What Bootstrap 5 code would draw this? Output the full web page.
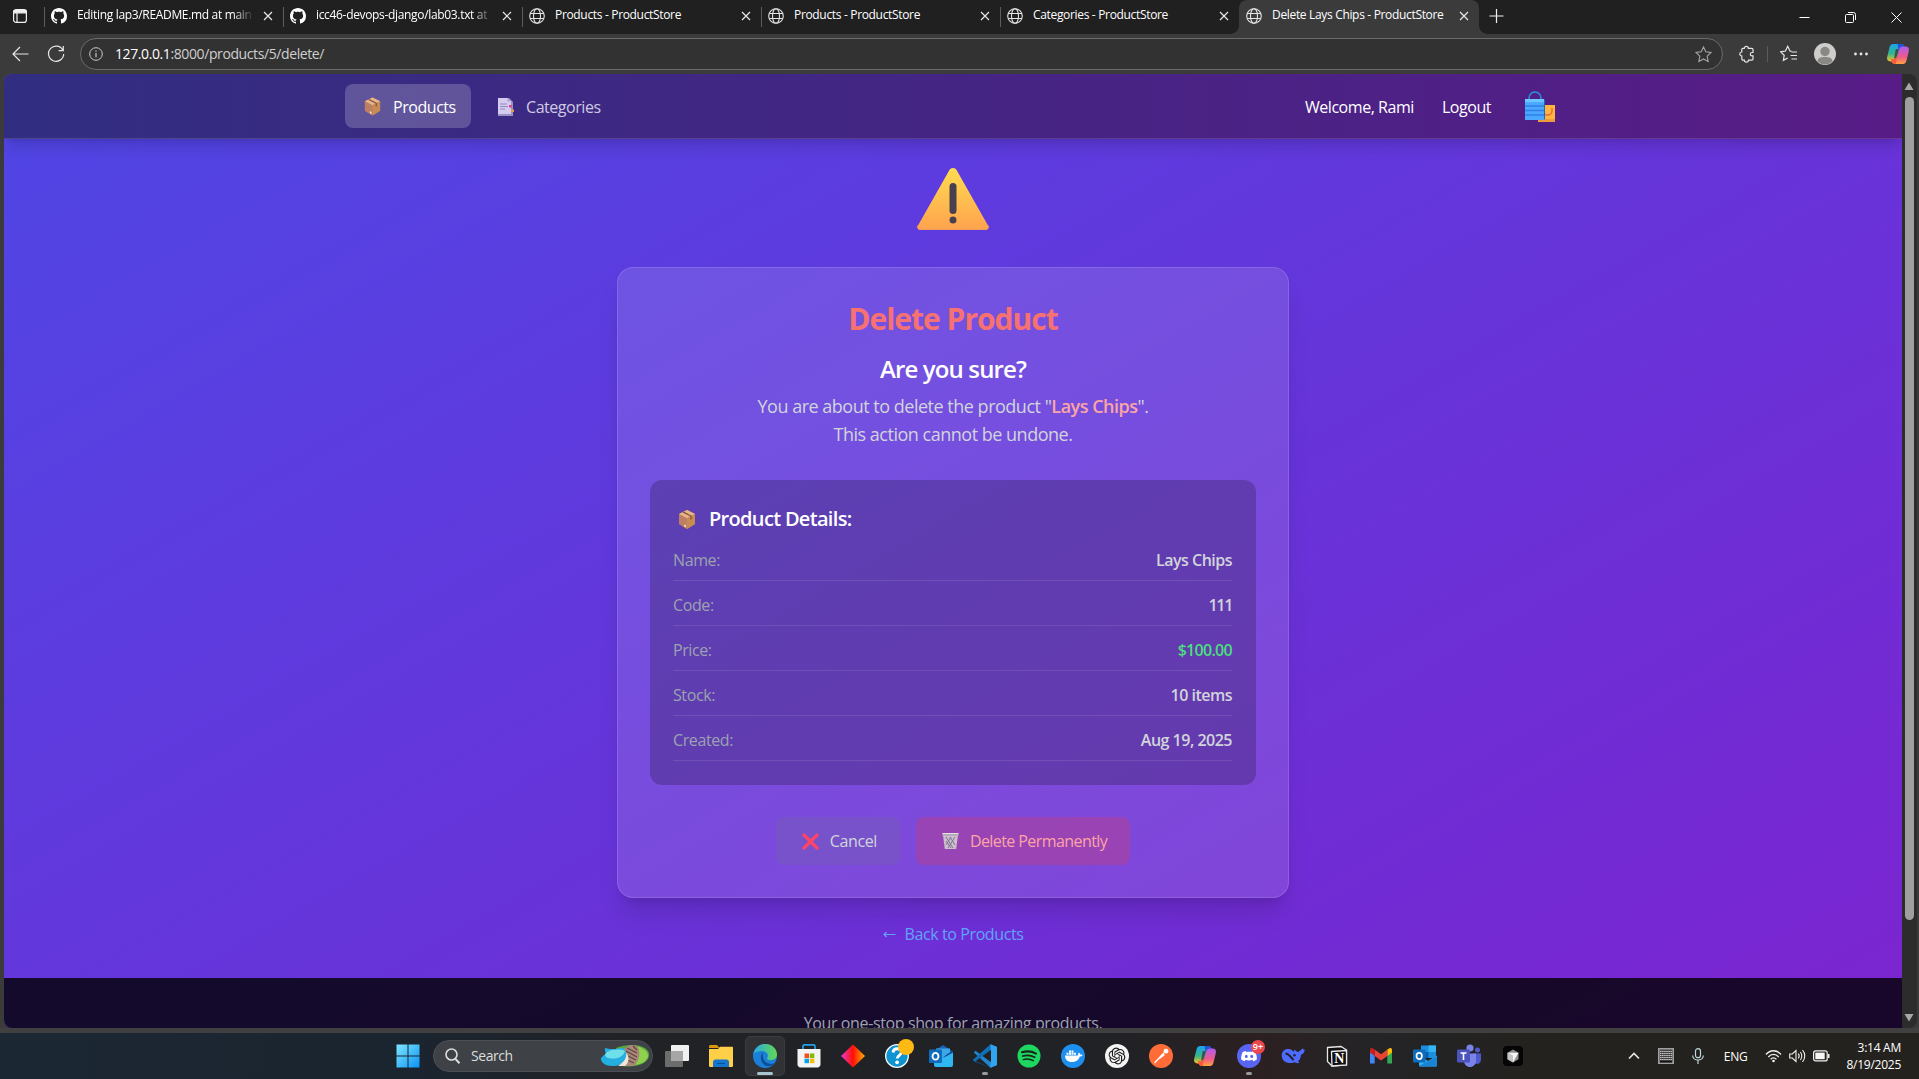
<!DOCTYPE html>
<html lang="en">
<head>
<meta charset="utf-8">
<meta name="viewport" content="width=device-width, initial-scale=1">
<title>Delete Lays Chips - ProductStore</title>
<link href="https://cdn.jsdelivr.net/npm/bootstrap@5.3.0/dist/css/bootstrap.min.css" rel="stylesheet">
<style>
  html, body { height: 100%; }
  body { font-family: "Open Sans", "Noto Sans", sans-serif; font-size: 16px; line-height: 24px; background: #3b3b3b; color: #fff; overflow: hidden; }
  svg { display: block; flex: none; }

  /* browser chrome */
  .tabstrip { height: 34px; background: #202020; padding-left: 44px; font-size: 12px; line-height: 16px; position: relative; }
  .tabmenu { position: absolute; left: 12px; top: 8px; }
  .tab-item { width: 239px; height: 34px; padding: 0 10px 2px 7px; position: relative; }
  .tab-item::before { content: ""; position: absolute; left: 0; top: 7px; width: 1px; height: 20px; background: #5c5c5c; }
  .tab-item .label { flex: 1 1 0; margin-left: 10px; margin-right: 9px; margin-top: -2px; overflow: hidden; white-space: nowrap; letter-spacing: -.33px; }
  .tab-item .fade-end { -webkit-mask-image: linear-gradient(to right, #000 88%, transparent); mask-image: linear-gradient(to right, #000 88%, transparent); }
  .tab-live { background: #3b3b3b; border-radius: 8px 8px 0 0; width: 240px; }
  .tab-live::before { left: -8px; top: auto; bottom: 0; width: 8px; height: 8px; background: radial-gradient(circle at 0 0, transparent 7.5px, #3b3b3b 8px); }
  .tab-live::after { content: ""; position: absolute; right: -8px; bottom: 0; width: 8px; height: 8px; background: radial-gradient(circle at 100% 0, transparent 7.5px, #3b3b3b 8px); }
  .wincontrols { gap: 35px; padding-right: 17px; }
  .toolbar-row { height: 40px; padding: 4px 9px 4px 12px; }
  .reload { margin-left: 18px; }
  .address { width: 1643px; height: 32px; margin-left: 15px; border: 1px solid #6b6b6b; border-radius: 16px; background: #323232; padding: 0 10px 0 8px; font-size: 14px; letter-spacing: -.4px; color: #cfcfcf; }
  .address b { font-weight: 400; color: #fff; }
  .tool-sep { width: 1px; height: 16px; margin: 0 12px 0 11px; background: #5c5c5c; }

  /* viewport */
  .viewport-row { height: 954px; padding-left: 4px; padding-right: 2px; }
  .site { width: 1898px; height: 954px; overflow: hidden; border-radius: 8px 0 0 8px; }
  .site-bg { height: 1090px; background: linear-gradient(to bottom right, #4f46e5, #7e22ce); }
  .scroller { width: 15px; background: #2c2c2c; border-radius: 0 8px 8px 0; padding: 8px 1px 6px 0; }
  .scroller .thumb { width: 9px; height: 823px; border-radius: 5px; background: #9f9f9f; margin-top: 6px; }
  .topnav { height: 65px; background: linear-gradient(to right, #312e81, #581c87); border-bottom: 1px solid rgba(255,255,255,.12); box-shadow: 0 10px 15px -3px rgba(0,0,0,.14), 0 4px 6px -4px rgba(0,0,0,.1); padding: 0 341px; font-weight: 500; position: relative; }
  .navpill { height: 44px; border-radius: 8px; padding: 1px 15px 0 17px; gap: 10px; color: #cfc9e2; text-decoration: none; letter-spacing: -.45px; }
  .navpill.current { background: rgba(255,255,255,.2); color: #fff; width: 126px; }
  .navpill + .navpill { margin-left: 8px; }
  .navuser { letter-spacing: -.45px; padding-top: 1px; }
  .bags { margin: 0 5px 0 33px; }
  .confirm { width: 672px; height: 631px; border: 1px solid rgba(255,255,255,.13); border-radius: 16px; background: rgba(255,255,255,.12); padding: 33px 32px 32px; margin-top: 36px; box-shadow: 0 20px 25px -5px rgba(0,0,0,.12), 0 8px 10px -6px rgba(0,0,0,.1); }
  .confirm h1 { font-size: 30px; line-height: 36px; font-weight: 700; color: #f87171; margin: 0 0 16px; letter-spacing: -1px; }
  .confirm h2 { font-size: 24px; line-height: 32px; font-weight: 650; margin: 0 0 7px; letter-spacing: -.85px; }
  .confirm .msg { font-size: 18px; line-height: 28px; color: #d1d5db; margin: 0; letter-spacing: -.49px; }
  .confirm .msg b { font-weight: 600; color: #fca5a5; }
  .details { border-radius: 12px; background: rgba(0,0,0,.2); padding: 25px 24px 24px 23px; margin-top: 32px; height: 305px; }
  .details h3 { font-size: 20px; line-height: 28px; font-weight: 650; letter-spacing: -.68px; margin: 0 0 7px; gap: 12px; padding-left: 4px; }
  .detail-row { height: 45px; border-bottom: 1px solid rgba(255,255,255,.1); padding-top: 12px; letter-spacing: -.4px; }
  .details h3 + .detail-row { height: 41px; padding-top: 8px; }
  .detail-row dt { font-weight: 400; color: #9ca3af; }
  .detail-row dd { font-weight: 650; color: #d1d5db; margin: 0; letter-spacing: -.5px; }
  .detail-row .money { color: #4ade80; letter-spacing: -.7px; }
  .detail-row .code-no { letter-spacing: -1.3px; }
  .act { height: 48px; border: 0; border-radius: 8px; padding: 0 23px 0 26px; gap: 11px; font-size: 16px; letter-spacing: -.4px; }
  .act, .act:hover { color: #d1d5db; background: rgba(107,114,128,.2); }
  .act-del, .act-del:hover { color: #fca5a5; background: rgba(200,60,115,.38); letter-spacing: -.58px; }
  .backlink { color: #60a5fa; text-decoration: none; gap: 9px; letter-spacing: -.4px; margin-top: 24px; }
  .site-footer { height: 112px; background: rgba(0,0,0,.8); color: #9ca3af; padding-top: 33px; letter-spacing: -.38px; }

  /* taskbar */
  .chrome-edge { height: 5px; background: #404040; }
  .taskbar { height: 46px; background: linear-gradient(to right, #1b2733 0, #1b2530 400px, #202226 620px, #212226 1120px, #2c2021 1260px, #242427 1370px, #23221e 1540px, #23221f 100%); padding-left: 386px; position: relative; }
  .tb-slot { width: 44px; height: 46px; position: relative; }
  .tb-slot.open::after { content: ""; position: absolute; left: 19px; top: 39px; width: 6px; height: 3px; border-radius: 2px; background: #9a9a9a; }
  .tb-slot.focused .tile { width: 40px; height: 40px; border-radius: 5px; background: #303236; border: 1px solid #3a3c40; }
  .tb-slot.focused::after { content: ""; position: absolute; left: 14px; top: 39px; width: 16px; height: 3px; border-radius: 2px; background: #a8c4d0; }
  .searchbox { width: 220px; height: 32px; border-radius: 16px; background: #3e4146; border: 1px solid #4b4e52; padding: 0 2px 0 11px; font-size: 14px; color: #dcdcdc; margin: 0 2px 0 3px; letter-spacing: -.45px; }
  .searchbox span { margin-left: 11px; }
  .tray { margin-left: auto; padding-right: 18px; font-size: 12px; line-height: 17px; letter-spacing: -.25px; }
  .tray .ico { margin-left: 18px; }
  .tray .ico-near { margin-left: 7px; }
</style>
</head>
<body>
<svg width="0" height="0" class="position-absolute">
  <defs>
    <linearGradient id="gWarn" x1="0" y1="0" x2="0" y2="1"><stop offset="0" stop-color="#ffdc50"/><stop offset="1" stop-color="#ffa34e"/></linearGradient>
    <linearGradient id="gWin" x1="0" y1="0" x2="1" y2="1"><stop offset="0" stop-color="#7fe6ff"/><stop offset="1" stop-color="#0a93f5"/></linearGradient>
    <linearGradient id="gCopA" x1="0" y1="0" x2="0" y2="1"><stop offset="0" stop-color="#1aa4ee"/><stop offset=".55" stop-color="#35b58a"/><stop offset="1" stop-color="#f2c61f"/></linearGradient>
    <linearGradient id="gCopB" x1="0" y1="0" x2="0" y2="1"><stop offset="0" stop-color="#b05cf0"/><stop offset=".6" stop-color="#ef5a8a"/><stop offset="1" stop-color="#ffa53d"/></linearGradient>
    <linearGradient id="gDia"><stop offset="0" stop-color="#e63bd0"/><stop offset=".5" stop-color="#ff1005"/><stop offset="1" stop-color="#ffb000"/></linearGradient>
    <linearGradient id="gEdge" x1="0" y1="0" x2="1" y2="0"><stop offset="0" stop-color="#2aa9e8"/><stop offset="1" stop-color="#62d84e"/></linearGradient>
    <symbol id="box" viewBox="0 0 20 20"><path d="M10 .5 18 4.500v10L10 19.500 2 14.500v-10z" fill="#c98a5c"/><path d="M10 .5 18 4.500 10 8.800 2 4.500z" fill="#e8b787"/><path d="M10 8.800 18 4.500v10l-8 5z" fill="#c98b54"/><path d="M2 4.500 10 8.800v10.700l-8-5z" fill="#bd7f63"/><path d="m5.300 2.900 8 4.200v3.100l1.500-.8V6.300l-8-4.200z" fill="#8a5a44"/><path d="M7.300 14.800l1.600.9v2.200l-1.600-.9z" fill="#f4e6df"/></symbol>
    <symbol id="globe" viewBox="0 0 16 16"><g fill="none" stroke="#e4e4e4" stroke-width="1.100"><circle cx="8" cy="8" r="7.300"/><ellipse cx="8" cy="8" rx="3.500" ry="7.300"/><path d="M1.200 5.500h13.600M1.200 10.500h13.600"/></g></symbol>
    <symbol id="gh" viewBox="0 0 16 16"><path fill="#fff" d="M8 0C3.580 0 0 3.580 0 8c0 3.540 2.290 6.530 5.470 7.590.4.070.55-.17.55-.38 0-.19-.01-.82-.01-1.490-2.010.37-2.530-.49-2.690-.94-.09-.23-.48-.94-.82-1.130-.28-.15-.68-.52-.01-.53.63-.01 1.080.58 1.230.82.72 1.210 1.870.87 2.330.66.07-.52.28-.87.51-1.070-1.780-.2-3.640-.89-3.640-3.950 0-.87.31-1.590.82-2.150-.08-.2-.36-1.020.08-2.120 0 0 .67-.21 2.200.82.64-.18 1.320-.27 2-.27s1.360.09 2 .27c1.530-1.040 2.200-.82 2.200-.82.44 1.100.16 1.920.08 2.120.51.56.82 1.270.82 2.150 0 3.070-1.870 3.750-3.650 3.950.29.25.54.73.54 1.480 0 1.070-.01 1.930-.01 2.200 0 .21.15.46.55.38A8.010 8.010 0 0 0 16 8c0-4.420-3.580-8-8-8z"/></symbol>
    <symbol id="x" viewBox="0 0 10 10"><path d="M1 1l8 8M9 1 1 9" stroke="#e8e8e8" stroke-width="1.200" fill="none"/></symbol>
    <symbol id="copilot" viewBox="0 0 24 24"><path d="M7 2h8c2 0 2.800 1 3.300 2.800L19 7h-3.200c-1.600 0-2.500.8-3 2.500l-2 7c-.6 2-1.600 3-3.500 3H4.500C1.600 19.500.5 17.500 1.200 14.800L3.500 5.500C4.100 3.200 5 2 7 2z" fill="url(#gCopA)"/><path d="M11.500 2H15c2 0 2.800 1 3.300 2.800L19 7h-3.200c-1.500 0-2.400.7-2.900 2z" fill="#1c53d8"/><path d="M17 22H9c-2 0-2.800-1-3.300-2.800L5 17h3.200c1.600 0 2.500-.8 3-2.500l2-7c.6-2 1.600-3 3.500-3h2.800c2.900 0 4 2 3.300 4.700l-2.300 9.300C19.900 20.800 19 22 17 22z" fill="url(#gCopB)"/><path d="M9.800 7h3l-2.600 9.500H8z" fill="#343238" opacity=".75"/><path d="M5 17h3.200c1.600 0 2.500-.8 3-2.500L9.800 22H9c-2 0-2.800-1-3.300-2.800z" fill="#ff5a3c"/></symbol>
  </defs>
</svg>

<div class="d-flex flex-column vh-100">
  <!-- tab strip -->
  <div class="tabstrip d-flex">
    <svg class="tabmenu" width="16" height="16" viewBox="0 0 16 16" fill="none" stroke="#f0f0f0" stroke-width="1.200"><rect x="1.600" y="1.600" width="12.800" height="12.800" rx="2.500"/><path d="M2 2.500h12v2.300H2z" fill="#f0f0f0"/><path d="M5 5v9"/></svg>
    <div class="tab-item d-flex align-items-center"><svg width="16" height="16"><use href="#gh"/></svg><span class="label fade-end">Editing lap3/README.md at main</span><svg width="10" height="10"><use href="#x"/></svg></div>
    <div class="tab-item d-flex align-items-center"><svg width="16" height="16"><use href="#gh"/></svg><span class="label fade-end">icc46-devops-django/lab03.txt at</span><svg width="10" height="10"><use href="#x"/></svg></div>
    <div class="tab-item d-flex align-items-center"><svg width="16" height="16"><use href="#globe"/></svg><span class="label">Products - ProductStore</span><svg width="10" height="10"><use href="#x"/></svg></div>
    <div class="tab-item d-flex align-items-center"><svg width="16" height="16"><use href="#globe"/></svg><span class="label">Products - ProductStore</span><svg width="10" height="10"><use href="#x"/></svg></div>
    <div class="tab-item d-flex align-items-center"><svg width="16" height="16"><use href="#globe"/></svg><span class="label">Categories - ProductStore</span><svg width="10" height="10"><use href="#x"/></svg></div>
    <div class="tab-item tab-live d-flex align-items-center"><svg width="16" height="16"><use href="#globe"/></svg><span class="label">Delete Lays Chips - ProductStore</span><svg width="10" height="10"><use href="#x"/></svg></div>
    <svg class="ms-2 mt-2" width="18" height="16" viewBox="0 0 18 16" stroke="#f0f0f0" stroke-width="1.200"><path d="M9.500 1v14M2.500 8h14"/></svg>
    <div class="wincontrols d-flex align-items-center ms-auto">
      <svg width="11" height="11" viewBox="0 0 11 11" stroke="#fff"><path d="M.5 5.500h10"/></svg>
      <svg width="11" height="11" viewBox="0 0 11 11" fill="none" stroke="#fff"><rect x=".5" y="2.500" width="8" height="8" rx="1"/><path d="M3 .5h5.500a2 2 0 0 1 2 2V8"/></svg>
      <svg width="11" height="11" viewBox="0 0 11 11" stroke="#fff"><path d="M.5.5l10 10M10.500.5l-10 10"/></svg>
    </div>
  </div>

  <!-- address row -->
  <div class="toolbar-row d-flex align-items-center">
    <svg width="17" height="16" viewBox="0 0 17 16" fill="none" stroke="#e6e6e6" stroke-width="1.200"><path d="M16.500 8H1M8 1 1 8l7 7"/></svg>
    <svg class="reload" width="18" height="18" viewBox="0 0 18 18" fill="none" stroke="#e6e6e6" stroke-width="1.200"><path d="M16 5.500A7.600 7.600 0 1 0 16.700 9M16.300 1v4.700h-4.700"/></svg>
    <div class="address d-flex align-items-center">
      <svg width="14" height="14" viewBox="0 0 14 14" fill="none" stroke="#c9c9c9"><circle cx="7" cy="7" r="6.300"/><path d="M7 6v4.300M7 3.500v1.200" stroke-width="1.200"/></svg>
      <span class="ms-2 ps-1"><b>127.0.0.1</b>:8000/products/5/delete/</span>
      <svg class="ms-auto" width="17" height="17" viewBox="0 0 17 17" fill="none" stroke="#a5a5a5" stroke-width="1.100"><path d="m8.500 1 2.300 4.800 5.200.7-3.800 3.700.9 5.300-4.600-2.500-4.600 2.500.9-5.300L1 6.500l5.200-.7z"/></svg>
    </div>
    <svg class="ms-3" width="17" height="18" viewBox="0 0 17 18" fill="none" stroke="#e6e6e6" stroke-width="1.200"><path d="M5.300 3.300a2 2 0 0 1 4 0h3.500a1.200 1.200 0 0 1 1.200 1.200v3h-1a1.700 1.700 0 0 0 0 3.400h1v3a1.200 1.200 0 0 1-1.200 1.200H9.500a2.100 2.100 0 0 1-4.200 0H4a1.200 1.200 0 0 1-1.200-1.200V11a2 2 0 0 1 0-4V4.500A1.200 1.200 0 0 1 4 3.300z"/></svg>
    <span class="tool-sep"></span>
    <svg width="18" height="18" viewBox="0 0 18 18" fill="none" stroke="#e6e6e6" stroke-width="1.200"><path d="M11.500 6.300 10 6 7.700 1.300 5.400 6l-4.700.8 3.500 3.500-.8 5 4.300-2.300M11.500 7H17M10.500 10.500H17M11.500 14H17"/></svg>
    <svg class="ms-3" width="22" height="22" viewBox="0 0 22 22"><circle cx="11" cy="11" r="11" fill="#cfcdca"/><circle cx="11" cy="8.500" r="4.700" fill="#8a8885"/><path d="M3.500 18.500C4 14.500 7 14 11 14s7 .5 7.500 4.500a11 11 0 0 1-15 0z" fill="#8a8885"/></svg>
    <svg class="ms-3" width="17" height="4" viewBox="0 0 17 4" fill="#e6e6e6"><circle cx="3.500" cy="2" r="1.400"/><circle cx="9" cy="2" r="1.400"/><circle cx="14.500" cy="2" r="1.400"/></svg>
    <svg class="ms-auto" width="24" height="24"><use href="#copilot"/></svg>
  </div>

  <!-- page -->
  <div class="viewport-row d-flex">
    <div class="site">
      <div class="site-bg d-flex flex-column">
        <nav class="topnav d-flex align-items-center">
          <a class="navpill current d-flex align-items-center" href="#"><svg width="21" height="19"><use href="#box"/></svg>Products</a>
          <a class="navpill d-flex align-items-center" href="#"><svg width="20" height="20" viewBox="1 0 20 20"><path d="M3 1h11l4 4v14H3z" fill="#9a92c4"/><path d="M3 1h9.500L16 4.500V17H3z" fill="#d4cbee"/><path d="M12.500 1v3.500H16z" fill="#a9a0d0"/><path d="M5 7h7M5 9.500h8M5 12h5" stroke="#9489c0"/><path d="M14 8h3v2.500h-3z" fill="#d8498a"/><path d="M16 12.500h3V15h-3z" fill="#e0a04a"/></svg>Categories</a>
          <span class="navuser ms-auto">Welcome, Rami</span>
          <span class="navuser ms-4 ps-1">Logout</span>
          <svg class="bags" width="32" height="32" viewBox="0 0 32 32"><path d="M14 15h17v17H14z" fill="#ffb43c"/><path d="M14 29h17v3H14z" fill="#ef9a3e"/><path d="M19 18v3a4.500 4 0 0 0 9 0v-3" fill="none" stroke="#ef6a3c" stroke-width="1.500"/><path d="M5 11V8a6 6 0 0 1 12 0v3" fill="none" stroke="#2c8de0" stroke-width="1.600"/><path d="M1 9h19v21H1z" fill="#4aa8ff"/><path d="M1 9h19v3H1z" fill="#6cc6ff"/><path d="M1 16h19M1 20.500h19M1 25h19" stroke="#2f7fec" stroke-width="1.500"/><path d="M20 9v21l1-1V10z" fill="#1c67c8"/></svg>
        </nav>

        <main class="d-flex flex-column align-items-center" style="height:839px">
          <svg style="margin-top:28px" width="74" height="64" viewBox="0 0 74 64"><path d="M33.300 3.200c1.600-2.900 5.800-2.900 7.400 0L72 58.500c1 2-.2 4-2.300 4H4.300c-2.100 0-3.300-2-2.300-4z" fill="url(#gWarn)"/><path d="M2 58.500c-.8 2 .2 4 2.300 4h65.400c2.100 0 3.300-2 2.300-4" fill="none" stroke="#f09a5c" stroke-width="1.200"/><rect x="33.500" y="16" width="7" height="31" rx="3.500" fill="#48404f"/><circle cx="37" cy="53" r="3.500" fill="#48404f"/></svg>
          <section class="confirm text-center">
            <h1>Delete Product</h1>
            <h2>Are you sure?</h2>
            <p class="msg">You are about to delete the product "<b>Lays Chips</b>".<br>This action cannot be undone.</p>
            <dl class="details mb-0 text-start">
              <h3 class="d-flex align-items-center"><svg width="20" height="21"><use href="#box"/></svg>Product Details:</h3>
              <div class="detail-row d-flex justify-content-between"><dt>Name:</dt><dd>Lays Chips</dd></div>
              <div class="detail-row d-flex justify-content-between"><dt>Code:</dt><dd class="code-no">111</dd></div>
              <div class="detail-row d-flex justify-content-between"><dt>Price:</dt><dd class="money">$100.00</dd></div>
              <div class="detail-row d-flex justify-content-between"><dt>Stock:</dt><dd>10 items</dd></div>
              <div class="detail-row d-flex justify-content-between"><dt>Created:</dt><dd>Aug 19, 2025</dd></div>
            </dl>
            <div class="d-flex justify-content-center gap-3" style="margin-top:32px">
              <button class="act btn d-flex align-items-center"><svg width="17" height="17" viewBox="0 0 17 17"><path d="M2 2l13 13M15 2 2 15" stroke="#ff4468" stroke-width="3.200" stroke-linecap="round"/></svg>Cancel</button>
              <button class="act act-del btn d-flex align-items-center"><svg width="17" height="17" viewBox="0 0 17 17"><path d="M1 2h15l-1.800 14H2.800z" fill="#cbbfd0"/><path d="M4 4l7 11M8 4l5 8M13 4 6 15M9 4 4 12M4 8l5 7" stroke="#7b6d86" stroke-width=".9"/><path d="M.5.500h16v2.500H.5z" fill="#b5adb5"/><path d="M.5.500h16" stroke="#e5e0e5"/></svg>Delete Permanently</button>
            </div>
          </section>
          <a class="backlink d-flex align-items-center" href="#"><svg width="13" height="10" viewBox="0 0 13 10" fill="none" stroke="#60a5fa" stroke-width="1.200"><path d="M12.500 5.500H1M3.500 3 1 5.500 3.500 8"/></svg>Back to Products</a>
        </main>
        <footer class="site-footer text-center flex-grow-1">Your one-stop shop for amazing products.</footer>
      </div>
    </div>
    <div class="scroller d-flex flex-column align-items-center">
      <svg width="10" height="9" viewBox="0 0 10 9" fill="#a8a8a8"><path d="M5 .5 9.500 8H.5z"/></svg>
      <div class="thumb"></div>
      <svg class="mt-auto" width="10" height="9" viewBox="0 0 10 9" fill="#a8a8a8"><path d="M5 8.500.5 1h9z"/></svg>
    </div>
  </div>

  <div class="chrome-edge"></div>

  <!-- taskbar -->
  <div class="taskbar d-flex align-items-center">
    <div class="tb-slot d-flex align-items-center justify-content-center"><svg width="24" height="24" viewBox="0 0 24 24"><path fill="url(#gWin)" d="M.5.500h11v11H.5zM12.500.500h11v11h-11zM.5 12.500h11v11H.5zM12.500 12.500h11v11h-11z"/></svg></div>
    <div class="searchbox d-flex align-items-center">
      <svg width="15" height="16" viewBox="0 0 15 16" fill="none" stroke="#dcdcdc" stroke-width="1.600"><circle cx="6.500" cy="6.500" r="5.500"/><path d="m10.500 11 4 4.200" stroke-width="2"/></svg>
      <span>Search</span>
      <svg class="ms-auto" width="50" height="24" viewBox="0 0 50 24"><path d="M16 4C28-1 48 0 49 10c1 9-12 14-28 12z" fill="#54a83a"/><path d="M33 2c10 0 16 6 15 11-3 6-8 7-13 8 5-6 4-13-2-19z" fill="#8fd04e"/><path d="M1 16C0 13 5 11 6 9 4 6 5 4 6 4c1 1 6 1 10 1 5-2 9-1 12 1 1 8-6 17-16 16C6 22 2 19 1 16z" fill="#25aee0"/><path d="M7 8c6-3 14-3 18-1-2 6-8 9-17 7-3-1-4-4-1-6z" fill="#6fe0ea"/><path d="M24 5c4-4 9-5 13-3 4 5 3 14-3 20H22c5-5 7-11 2-17z" fill="#a98877"/><path d="M27 4l10 5M26 7l11 6M28 12l8 4M27 16l7 3M33 2l4 4" stroke="#5f4444" stroke-width="1.300"/><path d="M18 22c6-4 9-8 8-13 4 4 3 10-1 13z" fill="#f0e5d8"/></svg>
    </div>
    <div class="tb-slot d-flex align-items-center justify-content-center"><svg width="24" height="22" viewBox="0 0 24 22"><rect x="6" y="0" width="18" height="16" rx="1" fill="#f0f0f0"/><rect x="0" y="6" width="18" height="16" rx="1" fill="#6c6c6c"/><rect x="6" y="6" width="12" height="10" fill="#a6a6a6"/></svg></div>
    <div class="tb-slot d-flex align-items-center justify-content-center"><svg width="24" height="22" viewBox="0 0 24 22"><path d="M0 1.500C0 .700.700 0 1.500 0H8l2.500 3H0z" fill="#d9960c"/><path d="M0 4h9l2-2.300h12c.600 0 1 .4 1 1V20.500c0 .8-.4 1.500-1 1.500H1c-.6 0-1-.7-1-1.500z" fill="#ffcf48"/><path d="M4 22v-5c0-1.500 1-2.500 2.500-2.500h11c1.500 0 2.500 1 2.500 2.500v5z" fill="#1575cf"/><path d="M8 18.500h8" stroke="#0b4f9c"/></svg></div>
    <div class="tb-slot focused d-flex align-items-center justify-content-center"><div class="tile d-flex align-items-center justify-content-center"><svg width="24" height="24" viewBox="0 0 24 24"><circle cx="12" cy="12" r="12" fill="#1a7fd6"/><path d="M.3 10C2 3.500 7 0 12.500 0 19 0 24 5 24 10.500c0 3.500-2.800 5.700-6 5.700-2.600 0-4-.9-4-1.700 0-.7.9-1.100.9-3C14.900 8.800 12 7 9 7 5 7 1.500 8.800.3 10z" fill="url(#gEdge)"/><path d="M10 8.200C7 11 6.500 18 12.500 21.500c3 1.300 6.500.6 9.300-2.500-2 1-4.300 1.200-6.300.5C10.500 18 9 13 10 8.200z" fill="#0d4d98"/></svg></div></div>
    <div class="tb-slot d-flex align-items-center justify-content-center"><svg width="24" height="24" viewBox="0 0 24 24"><path d="M6 5V2.200C6 1.200 6.700.800 7.500.800h9c.8 0 1.500.4 1.500 1.400V5" fill="none" stroke="#1da0e8" stroke-width="1.700"/><path d="M.5 5h23v15.500c0 1.500-1.300 3-3 3h-17c-1.700 0-3-1.500-3-3z" fill="#f3f3f3"/><path d="M7.500 9.500H12V14H7.500z" fill="#f25022"/><path d="M12.800 9.500h4.500V14h-4.500z" fill="#7fba00"/><path d="M7.500 14.700H12v4.500H7.500z" fill="#00a4ef"/><path d="M12.800 14.700h4.500v4.500h-4.500z" fill="#ffb900"/></svg></div>
    <div class="tb-slot d-flex align-items-center justify-content-center"><svg width="24" height="24" viewBox="0 0 24 24"><path d="M12 .5 24 12 12 23.500 0 12z" fill="url(#gDia)"/></svg></div>
    <div class="tb-slot d-flex align-items-center justify-content-center"><svg width="24" height="24" viewBox="0 0 24 24" overflow="visible"><circle cx="12" cy="12" r="11.300" fill="#0f94d2" stroke="#fff" stroke-width="1.300"/><path d="M8 8.500c.3-2.500 2-3.700 4.200-3.700 2.500 0 4.300 1.400 4.300 3.500 0 3-4.300 3.200-4.300 6.300" fill="none" stroke="#fff" stroke-width="2.900"/><circle cx="12.100" cy="18.300" r="1.900" fill="#fff"/><circle cx="21" cy="3" r="8" fill="#ffb914"/></svg></div>
    <div class="tb-slot d-flex align-items-center justify-content-center"><svg width="24" height="24" viewBox="0 0 24 24"><path d="M5 7 14 1l9 6v4H5z" fill="#1565b5"/><path d="M7 4.500h14v12H7z" fill="#3ca8ea"/><path d="M14 14 24 7v14c0 1.200-.8 2-2 2H7c-1.200 0-2-.8-2-2V9z" fill="#2fb7f2"/><path d="M14 14 24 8.500v-2L17 11z" fill="#0f3f8c"/><rect x="0" y="5.500" width="13" height="13.500" rx="1" fill="#0f6cbd"/><ellipse cx="6.500" cy="12.200" rx="3" ry="3.400" fill="none" stroke="#fff" stroke-width="1.800"/></svg></div>
    <div class="tb-slot open d-flex align-items-center justify-content-center"><svg width="24" height="24" viewBox="0 0 24 24"><path d="M17.500.2 24 3v18l-6.500 2.800L.8 8.500l1.700-1.700L18 18z" fill="#1f85cc"/><path d="M17.500 23.800.8 17.300 0 15.800 17.500.2 18 6 2.500 17.200z" fill="#0f6fb5"/><path d="M17.500.2 24 3v18l-6.500 2.800z" fill="#30a5ee"/><path d="M18 6v12l-8-6z" fill="#202226"/></svg></div>
    <div class="tb-slot d-flex align-items-center justify-content-center"><svg width="24" height="24" viewBox="0 0 24 24"><circle cx="12" cy="12" r="11.500" fill="#1ed760"/><g fill="none" stroke="#17251c" stroke-linecap="round"><path d="M5 8.300c4.800-1.400 10-1 14 1.300" stroke-width="2.100"/><path d="M5.700 12c4.200-1.200 8.500-.7 12 1.300" stroke-width="1.800"/><path d="M6.300 15.600c3.500-1 7-.6 10 1.100" stroke-width="1.500"/></g></svg></div>
    <div class="tb-slot d-flex align-items-center justify-content-center"><svg width="24" height="24" viewBox="0 0 24 24"><circle cx="12" cy="12" r="12" fill="#1d8fee"/><path d="M4 11.500h13c.2-1.200 0-2 .8-3 .9.600 1.300 1.300 1.400 2.200.9-.2 1.700 0 2.300.3-.5 1.100-1.500 1.500-2.700 1.500C17.500 16.500 14.500 18 11 18c-4.500 0-7-2.500-7-6.500z" fill="#fff"/><path d="M5.500 8.800h2v2h-2zM8 8.800h2v2H8zM10.500 8.800h2v2h-2zM13 8.800h2v2h-2zM8 6.400h2v2H8zM10.500 6.400h2v2h-2z" fill="#fff"/></svg></div>
    <div class="tb-slot d-flex align-items-center justify-content-center"><svg width="24" height="24" viewBox="0 0 24 24"><circle cx="12" cy="12" r="12" fill="#f4f4f4"/><path transform="translate(3.600 3.600) scale(.7)" fill="#1a1a1a" d="M22.282 9.821a5.985 5.985 0 0 0-.516-4.911 6.046 6.046 0 0 0-6.510-2.900A6.065 6.065 0 0 0 4.981 4.182a5.985 5.985 0 0 0-3.998 2.900 6.046 6.046 0 0 0 .743 7.097 5.980 5.980 0 0 0 .511 4.911 6.051 6.051 0 0 0 6.515 2.900A5.985 5.985 0 0 0 13.260 24a6.056 6.056 0 0 0 5.772-4.206 5.989 5.989 0 0 0 3.998-2.900 6.056 6.056 0 0 0-.748-7.073zm-9.022 12.608a4.476 4.476 0 0 1-2.876-1.041l.142-.080 4.778-2.758a.795.795 0 0 0 .393-.681v-6.737l2.020 1.169a.071.071 0 0 1 .038.052v5.583a4.504 4.504 0 0 1-4.495 4.494zm-9.661-4.125a4.471 4.471 0 0 1-.535-3.014l.142.085 4.783 2.758a.771.771 0 0 0 .781 0l5.843-3.369v2.332a.080.080 0 0 1-.033.062L9.740 19.950a4.499 4.499 0 0 1-6.141-1.646zM2.341 7.896a4.485 4.485 0 0 1 2.366-1.973V11.600a.766.766 0 0 0 .388.677l5.814 3.354-2.020 1.169a.076.076 0 0 1-.071 0l-4.830-2.787A4.504 4.504 0 0 1 2.341 7.872zm16.596 3.856L13.104 8.364 15.119 7.200a.076.076 0 0 1 .071 0l4.830 2.791a4.494 4.494 0 0 1-.677 8.104v-5.677a.790.790 0 0 0-.407-.667zm2.011-3.023l-.142-.085-4.774-2.782a.776.776 0 0 0-.785 0L9.409 9.230V6.897a.066.066 0 0 1 .028-.062l4.830-2.787a4.499 4.499 0 0 1 6.680 4.660zM8.307 12.863l-2.020-1.164a.080.080 0 0 1-.038-.057V6.074a4.499 4.499 0 0 1 7.376-3.454l-.142.081L8.704 5.459a.795.795 0 0 0-.393.681zm1.098-2.365l2.602-1.500 2.607 1.500v2.999l-2.597 1.500-2.607-1.500z"/></svg></div>
    <div class="tb-slot d-flex align-items-center justify-content-center"><svg width="24" height="24" viewBox="0 0 24 24"><circle cx="12" cy="12" r="12" fill="#ff6c37"/><path d="m5.500 19 6.500-7 3-3" stroke="#fff" stroke-width="1.300"/><path d="m8.500 15.500 5.500-6.300 2 1.800-4.500 3.500z" fill="#fff"/><circle cx="17" cy="7.200" r="2.400" fill="#fff"/></svg></div>
    <div class="tb-slot d-flex align-items-center justify-content-center"><svg width="24" height="24"><use href="#copilot"/></svg></div>
    <div class="tb-slot open d-flex align-items-center justify-content-center"><svg width="24" height="24" viewBox="0 0 24 24" overflow="visible"><circle cx="12" cy="12" r="12" fill="#5865f2"/><path d="M8.700 7c-1.300.2-2.300.6-3 1-1.200 2.200-1.800 5-1.500 7.600 1 .8 2.200 1.400 3.500 1.700l.9-1.500c2.200.8 4.600.8 6.800 0l.9 1.500c1.300-.3 2.500-.9 3.500-1.700.3-2.600-.3-5.400-1.500-7.600-.7-.4-1.700-.8-3-1l-.6 1c-1.800-.3-3.600-.3-5.400 0z" fill="#fff"/><ellipse cx="9.300" cy="12.400" rx="1.400" ry="1.600" fill="#5865f2"/><ellipse cx="14.700" cy="12.400" rx="1.400" ry="1.600" fill="#5865f2"/><circle cx="21" cy="3" r="7" fill="#e8484e"/><text x="21" y="6.200" text-anchor="middle" font-size="9" font-weight="600" fill="#fff" font-family="Open Sans">9+</text></svg></div>
    <div class="tb-slot d-flex align-items-center justify-content-center"><svg width="24" height="24" viewBox="0 0 24 24"><path d="M.8 12C.5 7.500 3.500 4.800 7.500 5c2.300.1 4 1.200 5 2.700l1.300-2.200c.8 1.300 1.500 2.100 3 2.500 1.300-.2 2-1.300 3-2l2.200-1.700c.3 1.700 1 1.400 1.700 1.200-.2 2.700-1.400 4.800-3.700 5.200 0 3-1.500 5.300-3 6.500.8.800 1.200.8 1.500 1.600-2 .8-3.800 0-5-.6C7.500 20.500 1.200 18 .8 12z" fill="#4d6bfe"/><path d="M4.500 9.500c3 .3 5 2.500 8 6.700" stroke="#242127" stroke-width="2" fill="none"/><circle cx="13.500" cy="11.300" r="1.200" fill="#242127"/></svg></div>
    <div class="tb-slot d-flex align-items-center justify-content-center"><svg width="24" height="24" viewBox="0 0 24 24"><path d="M2.500 3.500 16 2.500 21.500 6v15L7 22 2.500 17.500z" fill="#0f0f0f" stroke="#e8e8e8" stroke-width="1.300"/><path d="M6.500 7.500 21.500 6.500v14.500L7 22z" fill="#0f0f0f" stroke="#e8e8e8" stroke-width="1.300"/><text x="14.300" y="18.800" text-anchor="middle" font-size="14" font-weight="700" fill="#fff" font-family="Liberation Serif">N</text></svg></div>
    <div class="tb-slot d-flex align-items-center justify-content-center"><svg width="24" height="24" viewBox="0 0 24 24"><path d="M1 6v13.500h4.700V11z" fill="#4285f4"/><path d="M23 6v13.500h-4.700V11z" fill="#34a853"/><path d="M18.300 5.500 21 4c1.200-.3 2 .6 2 2v2.500L18.300 12z" fill="#fbbc04"/><path d="M5.700 5.500 12 10.300l6.300-4.800V12L12 16.600 5.700 12z" fill="#ea4335"/><path d="M5.700 5.500 3 4c-1.200-.3-2 .6-2 2v2.500L5.700 12z" fill="#c5221f"/></svg></div>
    <div class="tb-slot d-flex align-items-center justify-content-center"><svg width="24" height="24" viewBox="0 0 24 24"><path d="M8 1.500h15V14H8z" fill="#1b8fe0"/><path d="M15.500 1.500H23V8h-7.500z" fill="#34b4f2"/><path d="M8 8h7.500v6H8z" fill="#0b5cad"/><path d="M6 11.500 15 17l9-5.500V21c0 .8-.6 1.500-1.500 1.500h-15c-.9 0-1.500-.7-1.500-1.500z" fill="#37b3ee"/><path d="m6 22 18-10v9c0 .8-.6 1.500-1.500 1.500h-15z" fill="#1a84d4"/><rect y="5.500" width="12.500" height="13" rx="1" fill="#0f6cbd"/><ellipse cx="6.200" cy="12" rx="2.700" ry="3.100" fill="none" stroke="#fff" stroke-width="1.700"/></svg></div>
    <div class="tb-slot d-flex align-items-center justify-content-center"><svg width="24" height="24" viewBox="0 0 24 24"><circle cx="20.500" cy="6" r="2.500" fill="#5059c9"/><path d="M16 9.500h8v6c0 2.700-1.800 4.500-4 4.500-1.700 0-3-.8-4-2z" fill="#5059c9"/><circle cx="13" cy="4" r="3.600" fill="#7b83eb"/><path d="M7 9.500h12v7.500c0 3.300-2.700 6-6 6s-6-2.700-6-6z" fill="#7b83eb"/><rect y="5.500" width="13" height="13" rx="1.200" fill="#4b53bc"/><path d="M3.500 9h6M6.500 9v7" stroke="#fff" stroke-width="1.600"/></svg></div>
    <div class="tb-slot d-flex align-items-center justify-content-center"><svg width="20" height="20" viewBox="0 0 20 20"><rect width="20" height="20" rx="4" fill="#050505"/><path d="m10 3.500 5.500 3.200v6.600L10 16.500l-5.500-3.200V6.700z" fill="#8e8e8e"/><path d="M4.500 6.700h11L10 16.500V10z" fill="#f3f3f3"/><path d="M10 10v6.500l-5.500-3.200V6.700z" fill="#c4c4c4"/></svg></div>

    <div class="tray d-flex align-items-center">
      <svg width="12" height="8" viewBox="0 0 12 8" fill="none" stroke="#e8e8e8" stroke-width="1.600"><path d="m1 6.500 5-5 5 5"/></svg>
      <svg class="ico" width="16" height="16" viewBox="0 0 16 16"><rect width="16" height="16" fill="#a0a0a0"/><rect x="1.500" y="1.500" width="13" height="13" fill="#444"/><path d="M2 3.500h12M2 5.500h12M2 7.500h12M2 9.500h12M2 11.500h12" stroke="#c8c8c8" stroke-dasharray="1.500 .6"/><path d="M2 13.700h12" stroke="#111" stroke-width="1.500"/></svg>
      <svg class="ico" width="12" height="16" viewBox="0 0 12 16" fill="none" stroke="#bfd6dc" stroke-width="1.200"><rect x="3.500" y=".7" width="5" height="9" rx="2.500"/><path d="M.7 7.500c0 6 10.600 6 10.600 0M6 12v4"/></svg>
      <span class="ms-3 ps-1">ENG</span>
      <svg class="ico" width="17" height="14" viewBox="0 0 17 14" fill="none" stroke="#f0f0f0" stroke-width="1.300"><path d="M1 5.500c4.200-5 10.800-5 15 0M3.300 8c3-3.400 7.400-3.400 10.400 0M5.600 10.300c1.700-1.900 4.100-1.900 5.800 0"/><circle cx="8.500" cy="12" r="1.300" fill="#f0f0f0" stroke="none"/></svg>
      <svg class="ico-near" width="17" height="14" viewBox="0 0 17 14" fill="none" stroke="#f0f0f0" stroke-width="1.100"><path d="M.7 5h2.600L7 1.500v11L3.300 9H.7zM9.300 4.700c1 1.300 1 3.300 0 4.600M11.300 3c2 2.200 2 5.800 0 8M13.500 1.200c3 3.200 3 8.400 0 11.600"/></svg>
      <svg class="ico-near" width="17" height="12" viewBox="0 0 17 12"><rect x=".6" y=".9" width="13.600" height="10" rx="2" fill="none" stroke="#f0f0f0" stroke-width="1.200"/><rect x="2.300" y="2.600" width="9.400" height="6.600" fill="#f5f5f5"/><path d="M15 4h1.500v4H15z" fill="#f0f0f0"/></svg>
      <div class="text-end ms-3">3:14 AM<br>8/19/2025</div>
    </div>
  </div>
</div>
<script src="https://cdn.jsdelivr.net/npm/bootstrap@5.3.0/dist/js/bootstrap.bundle.min.js"></script>
</body>
</html>
